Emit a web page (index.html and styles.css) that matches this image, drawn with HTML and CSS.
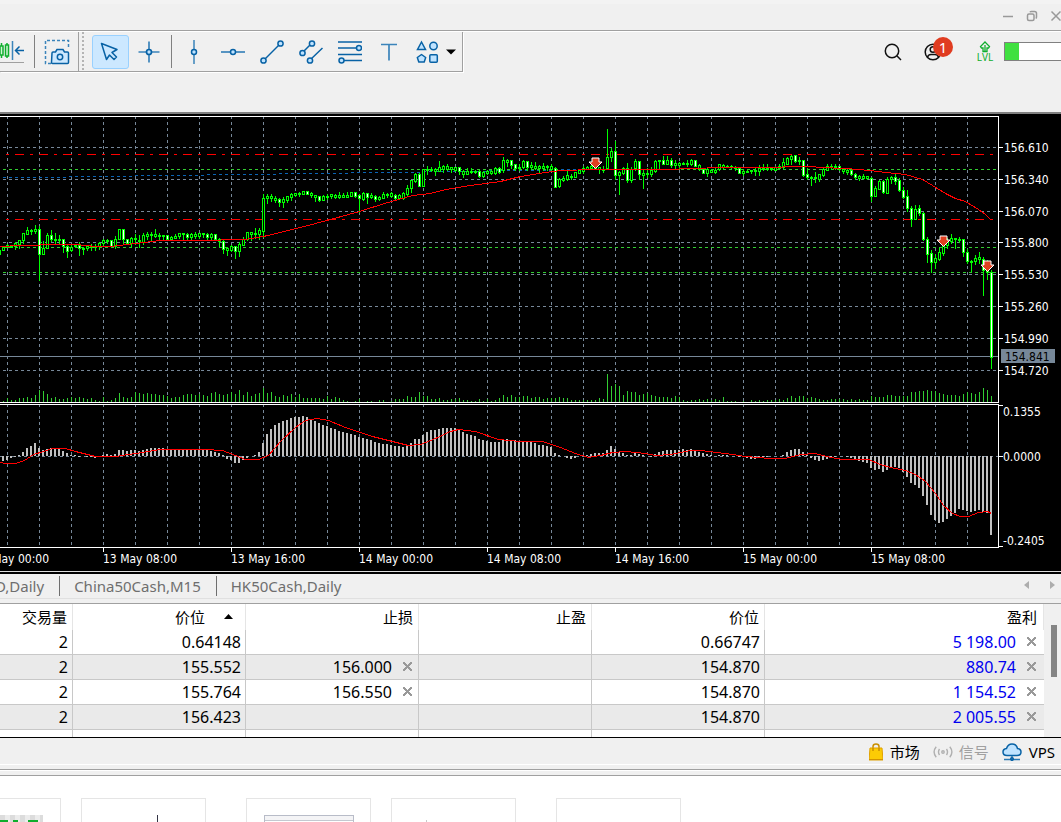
FILE: index.html
```
<!DOCTYPE html>
<html lang="zh-CN">
<head>
  <meta charset="UTF-8" />
  <meta name="viewport" content="width=device-width, initial-scale=1" />
  <title>MetaTrader</title>
  <link rel="stylesheet" href="styles.css">
</head>
<body>

  <header class="titlebar">
    <button class="win-btn" aria-label="最小化">
      <svg width="12" height="12"><path d="M1 6.5H11" stroke="#999" stroke-width="1.5"/></svg>
    </button>
    <button class="win-btn" aria-label="还原">
      <svg width="12" height="12" fill="none" stroke="#999" stroke-width="1.5"><rect x="1.5" y="4" width="6.5" height="6.5" rx="1.5"/><path d="M4 2.2Q4.300 1.500 5.500 1.500H8.500Q10.500 1.500 10.500 3.500V7Q10.500 8 9.800 8.500"/></svg>
    </button>
    <button class="win-btn" aria-label="关闭">
      <svg width="12" height="12"><path d="M1.500 1.500L10.500 10.500M10.500 1.500L1.500 10.500" stroke="#999" stroke-width="1.5"/></svg>
    </button>
  </header>

  <div class="toolbar">
    <div class="tools">
      <button class="tool tool-cut" aria-label="图表平移">
        <svg width="24" height="24" fill="none">
          <path d="M1.500 3V6M1.500 15V18M7 3V5M7 16V18" stroke="#0fae2d" stroke-width="1.5"/>
          <rect x="0" y="6" width="3" height="9" fill="#d2f5d6" stroke="#0fae2d" stroke-width="1.5"/>
          <rect x="5.500" y="5" width="3" height="11" fill="#d2f5d6" stroke="#0fae2d" stroke-width="1.5"/>
          <path d="M12.500 1V20" stroke="#3b84ba" stroke-width="1.5"/>
          <path d="M24 10.500H16M19.500 6.500L15.500 10.500L19.500 14.500" stroke="#0862a5" stroke-width="1.5"/>
          <path d="M0 22.500H24" stroke="#a0a0a0"/>
        </svg>
      </button>
      <span class="sep"></span>
      <button class="tool" aria-label="屏幕截图">
        <svg width="26" height="26" fill="none" stroke="#0862a5" stroke-width="1.5">
          <path d="M7 24.500H1.500V1.500H24.500V10" stroke-dasharray="3 2" stroke="#3b84ba"/>
          <path d="M8 14Q8 13 9 13H11.500L13 10.500H19L20.500 13H23.500Q24.500 13 24.500 14V23.500Q24.500 24.500 23.500 24.500H8.500Q7.500 24.500 7.500 23.500Z" fill="#cce8ff"/>
          <circle cx="16" cy="18" r="2.700"/>
        </svg>
      </button>
      <span class="grip"></span>
      <button class="tool active" aria-label="光标">
        <svg width="24" height="24"><path d="M3.500 3.500L19 9.500L14 12.500L18.500 17L16 19.500L11.500 15L8.500 19.500Z" fill="#cce8ff" stroke="#0862a5" stroke-width="1.500" stroke-linejoin="round"/></svg>
      </button>
      <button class="tool" aria-label="十字线">
        <svg width="24" height="24" fill="none" stroke="#3b84ba" stroke-width="1.700"><path d="M1.500 12H9.500M14.500 12H22.500M12 1.500V9.500M12 14.500V22.500"/><circle cx="12" cy="12" r="2.500" fill="#bfe3ff" stroke="#0862a5"/></svg>
      </button>
      <span class="sep"></span>
      <button class="tool" aria-label="垂直线">
        <svg width="24" height="24"><path d="M12 0V24" stroke="#3b84ba" stroke-width="1.500"/><circle cx="12" cy="12" r="2.500" fill="#bfe3ff" stroke="#0862a5" stroke-width="1.500"/></svg>
      </button>
      <button class="tool" aria-label="水平线">
        <svg width="24" height="24"><path d="M0 12H24" stroke="#3b84ba" stroke-width="1.700"/><circle cx="12" cy="12" r="2.500" fill="#bfe3ff" stroke="#0862a5" stroke-width="1.500"/></svg>
      </button>
      <button class="tool" aria-label="趋势线">
        <svg width="24" height="24" fill="#bfe3ff" stroke="#0862a5" stroke-width="1.500"><path d="M4 20L20 4"/><circle cx="20.500" cy="3.500" r="2.600"/><circle cx="3.500" cy="20.500" r="2.600"/></svg>
      </button>
      <button class="tool" aria-label="等距通道">
        <svg width="24" height="24" fill="#bfe3ff" stroke="#0862a5" stroke-width="1.500"><path d="M3 13L12 4M11 20L23.500 8"/><circle cx="13" cy="3.500" r="2.600"/><circle cx="3.500" cy="13" r="2.600"/><circle cx="11" cy="20.500" r="2.600"/></svg>
      </button>
      <button class="tool" aria-label="斐波那契回调">
        <svg width="24" height="24" fill="#bfe3ff" stroke="#0862a5" stroke-width="1.500"><path d="M0 2H24M0 8H19M0 14.500H24M5 20.500H24"/><circle cx="21" cy="8" r="2.500"/><circle cx="3.500" cy="20.500" r="2.500"/></svg>
      </button>
      <button class="tool" aria-label="文字">
        <svg width="24" height="24"><path d="M4 4.500H20M12 4.500V20.500" stroke="#3b84ba" stroke-width="1.700"/></svg>
      </button>
      <button class="tool" aria-label="图形">
        <svg width="24" height="24" fill="#bfe3ff" stroke="#0862a5" stroke-width="1.500"><path d="M5.500 2L9.500 9.500H1.500Z"/><circle cx="17.500" cy="6" r="3.700"/><path d="M5.500 14.500L9.700 17.500L8.200 22H2.800L1.300 17.500Z" stroke-linejoin="round"/><rect x="13.800" y="14.800" width="7.500" height="7.500" rx="1"/></svg>
      </button>
      <button class="tool-more" aria-label="更多图形">
        <svg width="10" height="6"><path d="M0 0.500H10L5 5.500Z"/></svg>
      </button>
    </div>

    <div class="account">
      <button class="icon-btn" aria-label="搜索">
        <svg width="18" height="18" fill="none" stroke="#111" stroke-width="1.500"><circle cx="8" cy="8" r="6.700"/><path d="M12.800 12.800L17 17"/></svg>
      </button>
      <button class="icon-btn user" aria-label="账户">
        <svg width="18" height="18" fill="none" stroke="#111" stroke-width="1.500"><circle cx="9" cy="9" r="7.800"/><circle cx="9" cy="6.500" r="2.800"/><path d="M3.500 14.500Q4 11.500 7 11.500H11Q14 11.500 14.500 14.500"/></svg>
        <span class="badge">1</span>
      </button>
      <button class="icon-btn level" aria-label="等级">
        <svg width="12" height="12" fill="none" stroke="#0fae2d" stroke-width="1.300"><path d="M6 1L10.500 5.500L9.500 7H8V10.500H4V7H2.500L1.500 5.500Z M6 4V10.500"/></svg>
        <span>LVL</span>
      </button>
      <div class="level-bar"><div class="level-fill"></div></div>
    </div>
  </div>

  <main class="chart">
    <svg id="chart" viewBox="0 4 1061 457" preserveAspectRatio="xMaxYMin slice" shape-rendering="crispEdges"></svg>
  </main>

  <nav class="tabs">
    <a class="tab tab-first" href="#">D,Daily</a>
    <a class="tab" href="#">China50Cash,M15</a>
    <a class="tab" href="#">HK50Cash,Daily</a>
    <div class="tab-arrows">
      <button aria-label="向左"><svg width="5" height="8"><path d="M5 0V8L0 4Z" fill="#adadad"/></svg></button>
      <button aria-label="向右"><svg width="5" height="8"><path d="M0 0V8L5 4Z" fill="#adadad"/></svg></button>
    </div>
  </nav>

  <section class="terminal">
    <table class="positions">
      <colgroup>
        <col class="col-volume"><col class="col-price"><col class="col-price"><col class="col-price"><col class="col-price"><col>
      </colgroup>
      <thead>
        <tr>
          <th>交易量</th>
          <th class="sorted">价位 <svg width="9" height="5"><path d="M0 5H9L4.500 0Z"/></svg></th>
          <th>止损</th>
          <th>止盈</th>
          <th>价位</th>
          <th>盈利</th>
        </tr>
      </thead>
      <tbody>
        <tr><td>2</td><td>0.64148</td><td></td><td></td><td>0.66747</td><td class="profit">5 198.00<button class="close" aria-label="平仓"></button></td></tr>
        <tr><td>2</td><td>155.552</td><td class="stop">156.000<button class="close" aria-label="删除止损"></button></td><td></td><td>154.870</td><td class="profit">880.74<button class="close" aria-label="平仓"></button></td></tr>
        <tr><td>2</td><td>155.764</td><td class="stop">156.550<button class="close" aria-label="删除止损"></button></td><td></td><td>154.870</td><td class="profit">1 154.52<button class="close" aria-label="平仓"></button></td></tr>
        <tr><td>2</td><td>156.423</td><td></td><td></td><td>154.870</td><td class="profit">2 005.55<button class="close" aria-label="平仓"></button></td></tr>
        <tr class="rest"><td></td><td></td><td></td><td></td><td></td><td></td></tr>
      </tbody>
    </table>
    <div class="scrollbar"><div class="thumb"></div></div>
  </section>

  <footer class="statusbar">
    <a href="#">
      <svg width="14" height="18"><path d="M4 6V3.500Q4 1 7 1Q10 1 10 3.500V6" fill="none" stroke="#c98f00" stroke-width="1.500"/><path d="M1 5H13L14 17H0Z" fill="#fccb05" stroke="#e0a100"/><path d="M4 5V8M10 5V8" stroke="#c98f00" stroke-width="1.500"/><path d="M0 16.500H14" stroke="#d39300"/></svg>
      市场
    </a>
    <a href="#" class="muted">
      <svg width="20" height="12" fill="none" stroke="#b0b0b0" stroke-width="1.400"><circle cx="10" cy="6" r="1.200"/><path d="M6.500 3Q4.500 6 6.500 9M13.500 3Q15.500 6 13.500 9M3.200 0.800Q-1 6 3.200 11.200M16.800 0.800Q21 6 16.800 11.200"/></svg>
      信号
    </a>
    <a href="#">
      <svg width="20" height="18" fill="none" stroke="#0862a5" stroke-width="1.500"><path d="M5 12.500Q1 12.500 1 9Q1 6 4.500 5.500Q6 1 10 1Q14.500 1 15.500 5.500Q19 6 19 9Q19 12.500 15 12.500Z" fill="#bfe3ff"/><path d="M10 13V16M2 16.500H18" stroke="#2a7ab5"/><circle cx="10" cy="16" r="1.300"/></svg>
      VPS
    </a>
  </footer>

  <div class="gallery">
    <div class="card card-cut"><div class="pixels"></div></div>
    <div class="card"><div class="stem"></div></div>
    <div class="card wide-gap"><div class="window"></div></div>
    <div class="card"><div class="dot"></div></div>
    <div class="card wide-gap"></div>
  </div>

  <script src="chart.js"></script>
</body>
</html>
```
FILE: styles.css
```
* {
  box-sizing: border-box;
}
body {
  display: flex;
  flex-direction: column;
  height: 100vh;
  margin: 0;
  overflow: hidden;
  background: #fff;
  color: #000;
  font-family: "Noto Sans", "Noto Sans CJK SC", sans-serif;
  font-size: 15px;
}
body > * {
  flex-shrink: 0;
}
button {
  padding: 0;
  border: 0;
  background: none;
  font: inherit;
}
a {
  color: inherit;
  text-decoration: none;
}
svg {
  display: block;
}

.titlebar {
  display: flex;
  justify-content: flex-end;
  align-items: center;
  gap: 12px;
  height: 31px;
  padding-top: 2px;
  background: linear-gradient(#f3f3f3 4px, #f0f0f0 4px);
  border-bottom: 1px solid #a0a0a0;
}
.win-btn:last-child {
  margin-right: -1px;
}

.toolbar {
  display: flex;
  justify-content: space-between;
  align-items: flex-start;
  height: 83px;
  background: #f0f0f0;
  border-top: 1px solid #fff;
  border-bottom: 2px solid #808080;
}
.tools {
  display: flex;
  align-items: center;
  gap: 2px;
  height: 40px;
  padding-right: 6px;
  border-right: 1px solid #a0a0a0;
  border-bottom: 1px solid #a0a0a0;
  box-shadow: 1px 1px #fff;
}
.tool {
  display: flex;
  justify-content: center;
  align-items: center;
  width: 37px;
  height: 34px;
  border: 1px solid transparent;
  border-radius: 3px;
}
.tool.active {
  background: #cce8ff;
  border-color: #99d1ff;
}
.tool svg {
  margin-left: -1px;
}
.tool-cut {
  justify-content: flex-start;
  width: 31px;
  border-left: 0;
}
.tool-cut svg {
  margin-left: 0;
}
.sep {
  width: 1px;
  height: 33px;
  margin: 0 2px 0 1px;
  background: #808080;
}
.tools .grip {
  width: 8px;
  height: 39px;
  margin: 0 4px 0 0;
  border-left: 1px solid #a0a0a0;
  background: repeating-linear-gradient(#b4b4b4 0 2px, transparent 2px 4px) 3px 0 / 2px 100% no-repeat;
}
.tool-more {
  margin-left: -3px;
}

.account {
  display: flex;
  align-items: center;
  height: 39px;
}
.icon-btn {
  position: relative;
  width: 20px;
  margin-right: 20px;
}
.user {
  margin-right: 31px;
}
.badge {
  position: absolute;
  left: 9px;
  top: -6px;
  width: 20px;
  height: 20px;
  border-radius: 50%;
  background: #e03c20;
  color: #fff;
  font-size: 15px;
  line-height: 20px;
  text-align: center;
}
.level {
  display: flex;
  flex-direction: column;
  align-items: center;
  margin-right: 9px;
  color: #0fae2d;
  font-size: 10px;
  line-height: 9px;
}
.level-bar {
  width: 57px;
  height: 19px;
  border: 1px solid #808080;
  border-right: 0;
  background: #fff;
}
.level-fill {
  width: 14px;
  height: 100%;
  background: #40e040;
}

.chart {
  background: #000;
  border-bottom: 1px solid #dcdcdc;
}
.chart svg {
  width: 100%;
  height: 457px;
}
.chart text {
  fill: #fff;
  font-family: "DejaVu Sans Condensed", "Noto Sans", sans-serif;
  font-size: 12px;
}
.chart .price-now {
  fill: #000;
}

.tabs {
  display: flex;
  align-items: center;
  height: 27px;
  background: #f0f0f0;
  border-top: 2px solid #000;
  border-bottom: 1px solid #e0e0e0;
  color: #6e6e6e;
}
.tab {
  padding: 0 15px 0 14px;
  border-right: 1px solid #6e6e6e;
  line-height: 20px;
}
.tab-first {
  margin-left: -19px;
}
.tab:nth-child(3) {
  border-right: 0;
}
.tab-arrows {
  display: flex;
  gap: 21px;
  margin: 0 6px 2px auto;
}

.terminal {
  display: flex;
  height: 139px;
  border-top: 4px solid #f0f0f0;
  border-bottom: 1px solid #000;
  overflow: hidden;
}
.positions {
  flex: 1;
  width: 100%;
  table-layout: fixed;
  border-collapse: separate;
  border-spacing: 0;
  border-top: 1px solid #a0a0a0;
}
.col-volume {
  width: 73px;
}
.col-price {
  width: 173px;
}
th {
  height: 26px;
  padding: 0 5px 0 0;
  border-right: 1px solid #e5e5e5;
  font-weight: normal;
  line-height: 20px;
  text-align: right;
}
.sorted {
  padding-right: 12px;
}
.sorted svg {
  display: inline-block;
  margin-left: 15px;
  vertical-align: 4px;
}
td {
  height: 25px;
  padding: 0 4px 0 0;
  border-right: 1px solid #c8c8c8;
  border-bottom: 1px solid #c8c8c8;
  font-size: 16px;
  line-height: 24px;
  text-align: right;
  white-space: nowrap;
}
th:last-child {
  padding-right: 6px;
}
td:last-child {
  border-right: 0;
}
tbody tr:nth-child(even) {
  background: #eaeaea;
}
.rest td {
  height: 9px;
  border-bottom: 0;
  line-height: 8px;
}
.profit {
  padding-right: 8px;
  color: #0000f0;
}
.stop {
  padding-right: 6px;
}
.close {
  display: inline-block;
  width: 9px;
  height: 9px;
  margin-left: 11px;
  vertical-align: 2px;
  background:
    linear-gradient(45deg, transparent 41%, #999 41% 59%, transparent 59%),
    linear-gradient(-45deg, transparent 41%, #999 41% 59%, transparent 59%);
}
.scrollbar {
  width: 17px;
  padding: 21px 4px 0 7px;
  background: #f0f0f0;
  border-top: 1px solid #a0a0a0;
}
.thumb {
  height: 52px;
  background: #858585;
}

.statusbar {
  display: flex;
  justify-content: flex-end;
  align-items: center;
  gap: 13px;
  height: 38px;
  padding: 0 6px 9px 0;
  background: linear-gradient(#f0f0f0 26px, #fff 26px 27px, #f0f0f0 27px 31px, #a0a0a0 31px 32px, #fff 32px 33px, #f0f0f0 33px);
  border-bottom: 1px solid #a0a0a0;
}
.statusbar a {
  display: flex;
  align-items: center;
  gap: 7px;
  line-height: 20px;
}
.statusbar .muted {
  gap: 6px;
  color: #a0a0a0;
}

.gallery {
  display: flex;
  flex: 1 1 0;
  gap: 20px;
  min-height: 0;
  padding-top: 22px;
}
.card {
  display: flex;
  justify-content: center;
  width: 125px;
  padding-top: 16px;
  border: 1px solid #e5e5e5;
  border-bottom: 0;
}
.card-cut {
  width: 61px;
  justify-content: flex-start;
  border-left: 0;
}
.wide-gap {
  margin-left: 20px;
}
.pixels {
  width: 43px;
  background:
    linear-gradient(90deg, #0fae2d 0 8px, transparent 8px 13px, #0fae2d 13px 18px, transparent 18px 28px, #0fae2d 28px 38px, transparent 38px) 0 5px no-repeat,
    repeating-linear-gradient(90deg, #dcdcdc 0 5px, #ececec 5px 10px);
}
.stem {
  width: 1px;
  margin-left: 28px;
  background: #334;
}
.window {
  width: 90px;
  border: 1px solid #b8bcc8;
  border-bottom: 0;
  background: linear-gradient(#f4f4f6 4px, #c4c8d0 4px 5px, #fff 5px);
}
.dot {
  width: 1px;
  margin: 5px 54px 0 0;
  background: #c8c8c8;
}
```
FILE: chart.js
```
const svg = document.getElementById('chart');
const STEP = 4;
const FIRST_X = 3;

// high, body top, body bottom, low (+ "d" for a falling candle)
const candles = `137 137 140 140|134 135 137 137|135 136 137 137|132 133 136 139|130 130 134 138|123 123 130 133|117 120 124 124|119 120 121 124|115 119 121 123|116 119 144 170d
131 138 144 144|123 125 138 138|120 125 129 131d|123 129 130 133|125 129 130 133|129 129 136 142d|134 136 141 147d|134 137 140 141|134 135 136 137|132 135 138 145d
137 138 139 144|136 136 138 140|134 136 137 140|134 136 137 140|132 133 136 139|129 130 133 136|129 130 131 133|130 130 136 137d|126 129 136 138|119 119 129 129
119 119 129 134d|129 129 133 134d|127 128 133 137|124 128 129 134|125 130 131 137|123 125 132 134|122 124 126 129|122 124 125 131|119 124 126 127|123 125 126 129
125 125 126 130|125 125 129 130d|126 127 129 130|124 126 128 128|123 123 126 128|123 123 124 129|123 124 127 130d|123 124 127 130|122 124 126 128|123 123 126 128
123 123 124 127|123 124 127 129d|123 124 127 129|124 124 129 129d|128 129 131 136|130 131 139 143d|137 138 140 145|135 136 140 141|136 136 141 148d|132 134 141 146
127 129 135 135|122 122 129 130|122 122 124 130|118 123 124 128|118 120 124 129|84 88 121 127|84 86 88 93|84 86 88 91|86 88 90 92|88 89 92 96d
87 89 92 97|86 86 90 92|83 84 87 90|83 83 85 86|82 83 84 86|81 81 84 84|81 81 84 84d|82 83 85 87|85 85 87 91|86 86 90 91d
85 86 90 90|84 86 87 89|84 84 86 88|84 85 87 88|82 85 87 88|83 85 87 87|82 85 87 87|82 82 86 86|82 82 86 87d|84 85 88 102d
82 83 89 90|83 83 87 93d|83 85 87 88|85 86 89 91d|86 87 89 90|82 84 88 88|83 84 85 87|82 83 86 87|84 85 88 89d|84 85 88 89
82 83 88 89|75 78 84 85|70 70 78 82|63 64 71 72|63 64 76 76d|59 59 76 76|56 59 60 64|57 59 60 61|58 59 61 65|51 57 61 61
55 56 59 62|54 56 59 60|57 57 59 62|57 57 60 61|57 57 61 64d|60 61 64 67|58 61 64 64|58 61 62 63|60 61 62 63|60 61 66 67d
61 62 66 67|60 61 63 64|60 61 63 64|57 58 63 64|57 58 62 63d|47 50 60 62|49 50 52 56|50 50 55 58d|54 54 58 60d|54 57 58 60
50 51 57 58|51 51 57 60d|52 55 57 59|52 56 58 59|55 56 58 62|53 56 58 60|55 56 57 60|54 56 59 60|57 58 77 77d|68 69 76 77
66 68 70 71|60 65 69 70|64 66 67 69|62 62 67 67|59 60 63 63|56 58 61 63|56 57 59 59|55 56 58 59|50 54 58 59|57 57 59 63
56 59 60 62|19 47 58 58|38 41 47 51|31 41 65 69d|61 62 65 84|57 58 63 64|53 58 70 72d|57 59 70 72|49 51 58 60|51 51 64 69d
60 63 65 78|58 63 64 67|57 60 64 66|50 51 61 62|50 50 51 58|46 50 54 54d|46 50 54 54|48 50 55 57d|50 53 55 59|52 53 55 59
52 53 54 54|50 53 54 56|49 50 54 55|50 50 56 56d|54 55 59 60|58 59 63 63d|58 59 63 66|59 60 62 62|58 60 62 63|54 54 59 60
54 55 57 59|55 56 57 57|55 56 57 58|56 57 58 60|58 58 63 63d|59 61 63 65|60 61 62 62|60 60 61 63|58 60 61 65|55 58 61 65
54 58 59 60|54 58 59 60|57 58 59 60|56 57 60 60|54 56 58 58|48 52 57 58|47 48 54 54|45 46 49 54|45 45 51 52d|47 50 51 54
50 50 65 66d|58 64 67 69d|66 67 68 75|62 67 68 72|64 64 69 71|58 59 65 66|54 56 60 60|54 56 57 59|54 56 57 59|56 56 59 60d
58 59 61 63|59 60 62 64|58 60 64 65d|63 64 67 69d|65 66 68 70|64 66 68 69|66 66 68 69|67 68 86 91d|76 78 86 86|70 71 79 79
70 71 82 83d|67 69 83 83|66 67 69 73|64 67 71 74d|68 70 80 81d|77 80 87 88d|80 86 98 101d|96 98 109 116d|95 99 109 109|95 98 103 105d
102 103 129 130d|127 129 144 152d|140 143 152 162d|144 148 152 158|138 142 149 150|133 136 143 145|128 130 135 138|124 128 131 133|128 128 129 138|127 129 130 132
129 129 142 146d|139 142 151 153d|150 151 152 161|145 148 151 154|142 147 149 153|147 149 160 185d|150 152 162 169d|160 162 247 258d`.split(/[|\n]/);

const volumes = [
  1, 4, 2, 2, 4, 4, 5, 4, 7, 12, 11, 8, 4, 5, 3, 3, 4, 5, 4, 5, 4, 3, 4, 2, 1, 5, 1, 2, 4, 9,
  5, 4, 5, 10, 9, 8, 9, 8, 8, 7, 7, 6, 4, 5, 5, 7, 8, 8, 7, 8, 7, 6, 9, 10, 8, 7, 8, 10, 8, 12,
  7, 10, 6, 8, 9, 14, 9, 10, 6, 5, 7, 6, 8, 5, 8, 4, 4, 4, 4, 4, 3, 6, 3, 5, 4, 2, 1, 0, 1, 3,
  0, 1, 1, 0, 2, 2, 0, 1, 3, 3, 3, 6, 5, 5, 10, 6, 6, 3, 3, 4, 2, 2, 3, 3, 4, 2, 2, 1, 1, 3,
  1, 3, 1, 2, 4, 7, 5, 7, 5, 5, 6, 6, 4, 5, 5, 3, 4, 4, 4, 5, 4, 4, 2, 2, 2, 2, 2, 2, 2, 4,
  3, 28, 16, 18, 16, 7, 11, 10, 10, 7, 8, 9, 7, 6, 5, 5, 5, 4, 6, 5, 2, 1, 2, 2, 3, 2, 3, 2, 3, 2,
  5, 1, 1, 1, 0, 1, 0, 2, 1, 2, 1, 2, 2, 2, 3, 2, 4, 6, 4, 6, 6, 4, 5, 4, 3, 2, 2, 3, 3, 3,
  3, 2, 3, 2, 3, 2, 2, 6, 5, 5, 5, 7, 7, 6, 6, 6, 6, 10, 10, 11, 11, 12, 11, 11, 9, 8, 7, 7, 7, 6,
  8, 10, 9, 8, 10, 14, 12, 6
];

const macd = [
  -5, -4, -2, -1, 1, 4, 8, 10, 13, 8, 6, 7, 8, 8, 7, 5, 3, 1, 1, -1, 0, -1, -1, -2, -1, 1, 2, 1, 2, 6,
  6, 5, 6, 6, 5, 6, 7, 8, 8, 8, 8, 7, 7, 7, 7, 7, 7, 7, 6, 6, 6, 6, 5, 4, 3, 1, -3, -4, -7, -7,
  -4, -2, 0, 1, 4, 13, 22, 27, 31, 33, 35, 36, 38, 39, 39, 40, 39, 37, 35, 33, 31, 30, 28, 27, 25, 24, 23, 22, 21, 19,
  18, 17, 16, 14, 13, 12, 12, 11, 10, 10, 9, 11, 13, 17, 17, 21, 24, 26, 26, 27, 28, 28, 28, 28, 27, 24, 22, 21, 20, 17,
  16, 15, 14, 14, 14, 16, 17, 16, 16, 15, 14, 14, 14, 13, 11, 11, 10, 9, 3, 1, 0, -2, -3, -2, 0, 0, 1, 2, 3, 3,
  3, 6, 10, 7, 4, 3, 1, 1, 3, 2, 1, 0, -1, 2, 4, 5, 6, 6, 6, 6, 7, 6, 7, 5, 4, 3, 2, 1, 0, 1,
  1, 1, 0, 0, -1, -1, -2, -3, -3, -1, -1, -1, 0, 0, 0, 1, 4, 6, 7, 7, 4, 2, -2, -4, -5, -4, -3, -1, -1, 0,
  0, -1, -2, -4, -5, -6, -7, -12, -14, -13, -16, -14, -11, -11, -12, -16, -21, -27, -29, -32, -40, -49, -59, -64, -67, -66, -63, -60, -57, -53,
  -54, -55, -56, -55, -54, -56, -57, -79
];

const average = '0,136 20,135 60,134 75,134 95,136 110,136 135,133 160,130 197,130 245,129 263,126 300,117 330,109 359,101 384,93 412,85 430,83 445,79 470,75 500,71 520,66 545,62 560,60 595,59 665,59 720,57 775,57 790,56 810,56 820,57 845,58 870,60 885,62 905,64 922,69 932,75 945,83 955,88 965,91 978,99 985,104 991,110';
const signal = '0,352 5,353 15,353 24,350 33,344 43,341 52,338 65,338 75,341 95,346 115,346 135,343 160,339 205,339 222,340 235,345 245,349 258,349 268,345 280,331 295,317 305,310 316,308 328,310 345,317 372,326 400,333 408,335 420,334 435,328 450,321 458,319 475,321 498,329 520,331 542,331 560,337 575,343 588,347 600,345 612,342 625,341 645,343 655,345 670,344 690,340 700,340 725,343 745,346 770,348 785,348 800,344 815,343 830,347 843,349 868,349 880,354 890,357 905,360 915,364 925,371 935,383 943,395 952,403 960,406 968,406 978,402 987,401 991,403';

const prices = [[37, '156.610'], [69, '156.340'], [101, '156.070'], [132, '155.800'], [164, '155.530'], [196, '155.260'], [228, '154.990'], [260, '154.720']];
const times = ['13 May 00:00', '13 May 08:00', '13 May 16:00', '14 May 00:00', '14 May 08:00', '14 May 16:00', '15 May 00:00', '15 May 08:00'];

let out = '';

function rect(x, y, w, h, color) {
  out += `<rect x="${x}" y="${y}" width="${w}" height="${h}" fill="${color}"/>`;
}

function dashed(d, color, pattern) {
  out += `<path d="${d}" fill="none" stroke="${color}" stroke-dasharray="${pattern}"/>`;
}

function polyline(points, color) {
  out += `<polyline points="${points}" transform="translate(0.5 0.5)" fill="none" stroke="${color}"/>`;
}

function text(x, y, value, cls = '') {
  out += `<text x="${x}" y="${y}" class="${cls}">${value}</text>`;
}

// grid
for (let x = 7; x < 998; x += 32) dashed(`M${x + 0.5} 6V437`, '#778899', '3 3');
prices.forEach(([y]) => dashed(`M3 ${y + 0.5}H998`, '#778899', '3 3'));
dashed('M0 346.5H1001', '#778899', '3 3');

// order levels
[59, 137, 162].forEach(y => dashed(`M3 ${y + 0.5}H998`, '#32cd32', '3 3'));
[44, 109].forEach(y => dashed(`M6 ${y + 0.5}H993`, '#ff0000', '3 6 9 6'));

// position line, one pixel higher about every 70
[3, 69, 135, 207, 279, 351, 423, 489, 561, 597].forEach((x, i, xs) => {
  if (i < xs.length - 1) dashed(`M${x} ${67.5 - i}H${xs[i + 1]}`, '#0a64b4', '3 3');
});
rect(0, 246, 998, 1, '#778899');

volumes.forEach((v, i) => rect(FIRST_X + i * STEP, 292 - v, 1, v, '#32cd32'));

candles.forEach((row, i) => {
  const x = FIRST_X + i * STEP;
  const [high, top, bottom, low] = row.split(' ').map(parseFloat);
  rect(x, high, 1, low - high + 1, '#00ff00');
  rect(x - 1, top, 3, bottom - top + 1, '#00ff00');
  if (bottom - top > 1) rect(x, top + 1, 1, bottom - top - 1, row.endsWith('d') ? '#ffffff' : '#000000');
});
rect(0, 140, 1, 5, '#00ff00');
polyline(average, '#ff0000');

macd.forEach((v, i) => rect(FIRST_X - 1 + i * STEP, v > 0 ? 346 - v : 346, 2, Math.abs(v), '#c0c0c0'));
polyline(signal, '#ff0000');

// frames and ticks
rect(0, 6, 999, 1, '#fff');
rect(0, 292, 999, 1, '#fff');
rect(998, 6, 1, 287, '#fff');
rect(0, 294, 999, 1, '#fff');
rect(0, 437, 999, 1, '#fff');
rect(998, 294, 1, 144, '#fff');
[295, 346, 436].forEach(y => rect(999, y, 4, 1, '#fff'));

prices.forEach(([y, label]) => {
  rect(999, y, 4, 1, '#fff');
  text(1004, y + 5, label);
});
rect(1001, 239, 54, 14, '#778899');
text(1005, 251, '154.841', 'price-now');
text(1003, 306, '0.1355');
text(1003, 351, '0.0000');
text(1003, 435, '-0.2405');

times.forEach((label, i) => {
  const x = -25 + i * 128;
  rect(x, 438, 1, 4, '#fff');
  text(x, 453, label);
});

// sell arrows
[[595, 58], [943, 136], [987, 161]].forEach(([x, y]) => {
  out += `<path d="M${x - 3} ${y - 10}h7v4h3l-6.500 6.500l-6.500 -6.500h3z" fill="#e04020" stroke="#fff" shape-rendering="auto"/>`;
});

svg.innerHTML = out;
```
